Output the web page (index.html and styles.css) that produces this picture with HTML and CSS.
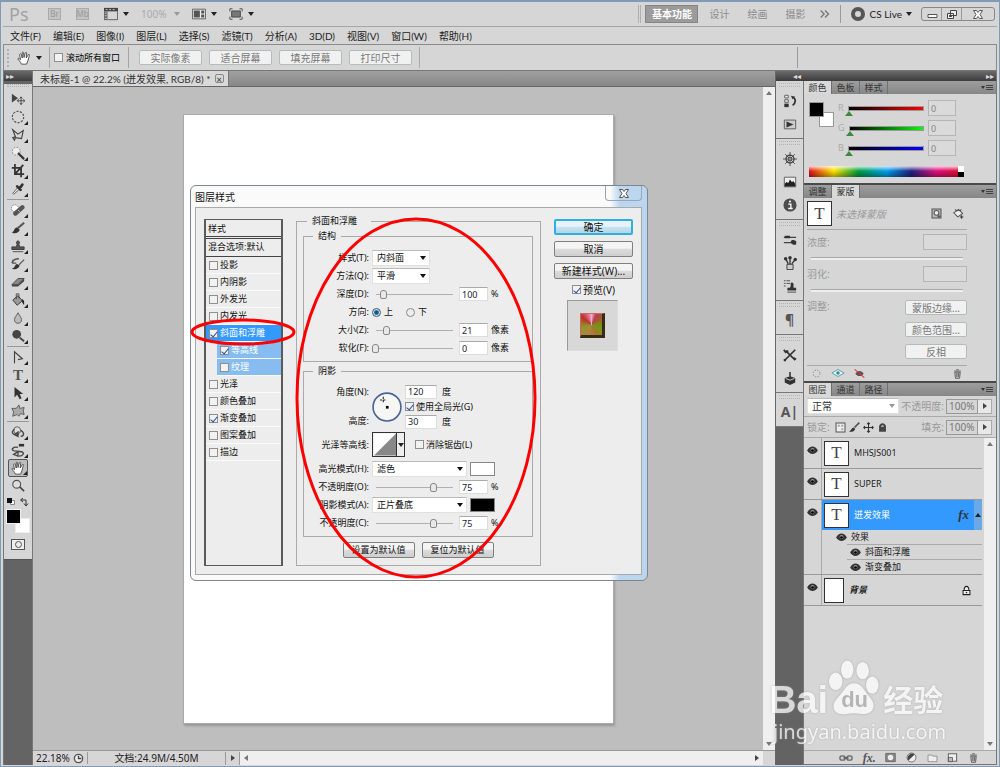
FILE: index.html
```html
<!DOCTYPE html>
<html lang="zh-CN">
<head>
    <meta charset="UTF-8">
    <meta name="viewport" content="width=device-width, initial-scale=1.0">
    <link rel="stylesheet" href="styles.css">
    <title>未标题-1</title>
</head>
<body>
    <header class="titlebar">
        <span class="logo">Ps</span>
        <button class="app-box">Br</button>
        <button class="app-box">Mb</button>
        <button class="app-btn">
            <svg class="icon" viewBox="0 0 16 16"><path d="M0 1h16v4H0z" fill="#444"/><path d="M2 3h2M6 3h2M10 3h2" stroke="#ddd"/><path d="M0 5h4v10H0z" fill="#666"/><path d="M1 7h2M1 10h2M1 13h2" stroke="#ddd"/><path d="M4 14.500h11.500V5" fill="none" stroke="#555"/></svg>
            <i class="arrow"></i>
        </button>
        <button class="app-btn dim">100% <i class="arrow"></i></button>
        <button class="app-btn">
            <svg class="icon" viewBox="0 0 16 16"><path d="M.500 2.500h15v11H.500z" fill="#eee" stroke="#555"/><path d="M2 4h7v8H2zM10.500 4H14v3.500h-3.500zM10.500 8.500H14V12h-3.500z" fill="#555"/></svg>
            <i class="arrow"></i>
        </button>
        <button class="app-btn">
            <svg class="icon" viewBox="0 0 16 16"><path d="M3 4.500h10v7H3z" fill="#777" stroke="#444"/><path d="M1 5V2h3M12 2h3v3M15 11v3h-3M4 14H1v-3" fill="none" stroke="#444"/></svg>
            <i class="arrow"></i>
        </button>
        <div class="workspaces">
            <button class="workspace current">基本功能</button>
            <button class="workspace">设计</button>
            <button class="workspace">绘画</button>
            <button class="workspace">摄影</button>
            <button class="workspace more" aria-label="更多">
                <svg class="icon" viewBox="0 0 16 16"><path d="M3 4l4 4-4 4M8 4l4 4-4 4" fill="none" stroke="#777" stroke-width="1.500"/></svg>
            </button>
        </div>
        <button class="cslive"><span class="ring"></span>CS Live<i class="arrow"></i></button>
        <div class="win-buttons">
            <button aria-label="最小化"><svg viewBox="0 0 18 13"><path d="M5 6.500h9v3H5z" fill="#fff" stroke="#555"/></svg></button>
            <button aria-label="还原"><svg viewBox="0 0 18 13"><path d="M7.500 2.500h6v5h-6zM4.500 5.500h6v5h-6z" fill="#eee" stroke="#444"/><path d="M6.500 7.500h2v1h-2z" stroke="#444"/></svg></button>
            <button aria-label="关闭" class="wide"><svg viewBox="0 0 18 13"><path d="M4.500 2.500h3L9 4.500l1.500-2h3L11 6.500l2.500 4h-3L9 8.500l-1.500 2h-3L7 6.500z" fill="#fff" stroke="#555"/></svg></button>
        </div>
    </header>

    <nav class="menubar">
        <a href="#">文件(F)</a>
        <a href="#">编辑(E)</a>
        <a href="#">图像(I)</a>
        <a href="#">图层(L)</a>
        <a href="#">选择(S)</a>
        <a href="#">滤镜(T)</a>
        <a href="#">分析(A)</a>
        <a href="#">3D(D)</a>
        <a href="#">视图(V)</a>
        <a href="#">窗口(W)</a>
        <a href="#">帮助(H)</a>
    </nav>

    <div class="options">
        <i class="grip-v"></i>
        <svg class="icon" viewBox="0 0 16 16"><path d="M5 15c-1-3-3-4-4-6 0-1 1-1 3 1L3 4c0-1 1.500-1 2 0l1 4V2c0-1 1.500-1 1.500 0L8 7.500 9.500 2c.500-1 1.500-.500 1.500.500L10.500 8 13 4c1-.500 1.500 0 1 1.500L12.500 11 11 15z" fill="#fff" stroke="#444"/></svg>
        <i class="arrow"></i>
        <label class="scroll-all"><input type="checkbox" class="check"> 滚动所有窗口</label>
        <button class="opt-btn">实际像素</button>
        <button class="opt-btn">适合屏幕</button>
        <button class="opt-btn">填充屏幕</button>
        <button class="opt-btn">打印尺寸</button>
        <i class="opt-end"></i>
    </div>

    <main class="main">
        <aside class="tools">
            <div class="dock-head"><i class="dbl">▸▸</i></div>
            <div class="tools-body">
                <i class="grip"></i>
                <button class="tool single"><svg class="icon" viewBox="0 0 16 16"><path d="M1 2v10l7-5z" fill="#444"/><path d="M11.500 6v8M7.500 10h8M10 7.500l1.500-2 1.500 2M10 12.500l1.500 2 1.500-2M9 8.500L7 10l2 1.500M14 8.500l2 1.500-2 1.500" fill="none" stroke="#444"/></svg></button>
                <button class="tool"><svg class="icon" viewBox="0 0 16 16"><circle cx="8" cy="8" r="6.500" fill="none" stroke="#555" stroke-width="1.300" stroke-dasharray="2.500 1.500"/></svg></button>
                <button class="tool"><svg class="icon" viewBox="0 0 16 16"><path d="M2 2l3 8-3 1 2 3 1-3 7 1 2-9-6 4z" fill="none" stroke="#444" stroke-width="1.300"/></svg></button>
                <button class="tool"><svg class="icon" viewBox="0 0 16 16"><circle cx="6" cy="6" r="4.500" fill="#eee" stroke="#777" stroke-dasharray="2 1.500"/><path d="M8 8l7 7" stroke="#333" stroke-width="2.500"/></svg></button>
                <button class="tool"><svg class="icon" viewBox="0 0 16 16"><path d="M4.500 0v11.500H15M1 4.500h10.500V15M5 11l9-10" fill="none" stroke="#333" stroke-width="2"/></svg></button>
                <button class="tool"><svg class="icon" viewBox="0 0 16 16"><path d="M3 14l-1-1 6-7 2 2z" fill="#eee" stroke="#555"/><path d="M7 5l4 4M10 7l3-4" stroke="#333" stroke-width="3" stroke-linecap="round"/></svg></button>
                <hr>
                <button class="tool"><svg class="icon" viewBox="0 0 16 16"><circle cx="4.500" cy="6" r="4" fill="#fff" stroke="#777" stroke-dasharray="2 1"/><path d="M5 12l8-7" stroke="#555" stroke-width="5" stroke-linecap="round"/><path d="M8 8l2 2" stroke="#ccc"/></svg></button>
                <button class="tool"><svg class="icon" viewBox="0 0 16 16"><path d="M8 8l7-6" stroke="#555" stroke-width="2.500"/><path d="M1 13c3-1 2-5 6-6l3 3c-1 4-6 5-9 3z" fill="#333"/></svg></button>
                <button class="tool"><svg class="icon" viewBox="0 0 16 16"><path d="M6 9L7 6C4 1 12 1 9 6l1 3h5v3H1V9z" fill="#555" stroke="#333"/><path d="M2 14.500h12" stroke="#444"/></svg></button>
                <button class="tool"><svg class="icon" viewBox="0 0 16 16"><path d="M1 13c4 0 3-5 6-5l3 2c-2 4-6 5-9 3z" fill="#333"/><path d="M9 9l6-6M1 7c1-4 4-5 8-5M2 3v4h4" fill="none" stroke="#555" stroke-width="1.500"/></svg></button>
                <button class="tool"><svg class="icon" viewBox="0 0 16 16"><path d="M1 11l7-7h7l-7 7z" fill="#888" stroke="#444"/><path d="M1 11v2h7l7-6V4L8 11z" fill="#444"/></svg></button>
                <button class="tool"><svg class="icon" viewBox="0 0 16 16"><path d="M2 8l6-5 5 6-6 5z" fill="#999" stroke="#333"/><path d="M6 7V1h3v5" fill="none" stroke="#444"/><path d="M12 7c4 0 3 5 3 7l-2-3z" fill="#222"/></svg></button>
                <button class="tool"><svg class="icon" viewBox="0 0 16 16"><path d="M8 2c2 4 4 5 4 8s-2 4-4 4-4-1-4-4 2-4 4-8z" fill="#bbb" stroke="#555"/></svg></button>
                <button class="tool"><svg class="icon" viewBox="0 0 16 16"><circle cx="6.500" cy="6" r="5" fill="#444"/><path d="M10 10l5 4" stroke="#444" stroke-width="2"/></svg></button>
                <hr>
                <button class="tool"><svg class="icon" viewBox="0 0 16 16"><path d="M4 15V2l9 8-5 1" fill="none" stroke="#444" stroke-width="1.300"/></svg></button>
                <button class="tool type">T</button>
                <button class="tool"><svg class="icon" viewBox="0 0 16 16"><path d="M4 1v12l3-3 3 5 2-1-2-5h4z" fill="#333"/></svg></button>
                <button class="tool"><svg class="icon" viewBox="0 0 16 16"><path d="M9 1l1 4 5-1-1 4 1 4-4-1-2 3-2-2-5 2 1-5-2-4 5 0z" fill="#aaa" stroke="#555" stroke-linejoin="round"/></svg></button>
                <hr>
                <button class="tool"><svg class="icon" viewBox="0 0 16 16"><circle cx="7" cy="6" r="4" fill="#ddd" stroke="#555"/><path d="M4 5C-2 9 4 12 9 11M11 6c5 3 4 7 0 7M8 8v5l-4-2z" fill="none" stroke="#444" stroke-width="1.500"/></svg></button>
                <button class="tool"><svg class="icon" viewBox="0 0 16 16"><path d="M9 1h6v3H9z" fill="#333"/><path d="M8 5C2 4-1 8 4 9l8 1c4 1 2 5-3 5M8 10v5l-5-2z" fill="none" stroke="#444" stroke-width="1.500"/></svg></button>
                <button class="tool picked"><svg class="icon" viewBox="0 0 16 16"><path d="M5 15c-1-3-3-4-4-6 0-1 1-1 3 1L3 4c0-1 1.500-1 2 0l1 4V2c0-1 1.500-1 1.500 0L8 7.500 9.500 2c.500-1 1.500-.500 1.500.500L10.500 8 13 4c1-.500 1.500 0 1 1.500L12.500 11 11 15z" fill="#fff" stroke="#444"/></svg></button>
                <button class="tool single"><svg class="icon" viewBox="0 0 16 16"><circle cx="6.500" cy="6" r="4.500" fill="#ddd" stroke="#555" stroke-width="1.300"/><path d="M10 9l5 5" stroke="#444" stroke-width="2"/></svg></button>
                <div class="swatch-keys">
                    <svg viewBox="0 0 24 10"><path d="M4.500 3.500h4v4h-4z" fill="#fff" stroke="#888"/><path d="M1 1h5v5H1z" fill="#111"/><path d="M15 3h5v5M17 1l-2.500 2L17 5M18 6.500L20 9l2-2.500" fill="none" stroke="#333"/></svg>
                </div>
                <div class="swatches"><i class="bg"></i><i class="fg"></i></div>
                <button class="quick-mask" aria-label="快速蒙版"><i></i></button>
            </div>
        </aside>

        <section class="document">
            <div class="doc-tabs">
                <div class="doc-tab">未标题-1 @ 22.2% (迸发效果, RGB/8) * <button aria-label="关闭" class="tab-x">×</button></div>
            </div>
            <div class="work">
                <div class="canvas">
                    <div class="paper"></div>

                    <form class="dialog">
                        <div class="dialog-title">
                            <span>图层样式</span>
                            <button type="button" class="dialog-x" aria-label="关闭"><svg viewBox="0 0 18 13"><path d="M4.500 2.500h3L9 4.500l1.500-2h3L11 6.500l2.500 4h-3L9 8.500l-1.500 2h-3L7 6.500z" fill="#fff" stroke="#555"/></svg></button>
                        </div>
                        <div class="dialog-body">
                            <div class="styles">
                                <div class="styles-head">样式</div>
                                <div class="styles-blend">混合选项:默认</div>
                                <label class="style"><input type="checkbox" class="check">投影</label>
                                <label class="style"><input type="checkbox" class="check">内阴影</label>
                                <label class="style"><input type="checkbox" class="check">外发光</label>
                                <label class="style"><input type="checkbox" class="check">内发光</label>
                                <label class="style on"><input type="checkbox" class="check" checked>斜面和浮雕</label>
                                <label class="style sub"><input type="checkbox" class="check" checked>等高线</label>
                                <label class="style sub"><input type="checkbox" class="check">纹理</label>
                                <label class="style"><input type="checkbox" class="check">光泽</label>
                                <label class="style"><input type="checkbox" class="check">颜色叠加</label>
                                <label class="style"><input type="checkbox" class="check" checked>渐变叠加</label>
                                <label class="style"><input type="checkbox" class="check">图案叠加</label>
                                <label class="style"><input type="checkbox" class="check">描边</label>
                            </div>

                            <fieldset class="bevel">
                                <legend>斜面和浮雕</legend>
                                <fieldset class="group">
                                    <legend>结构</legend>
                                    <div class="row">
                                        <label class="name" for="style">样式(T):</label>
                                        <span class="pick"><select id="style"><option>内斜面</option></select></span>
                                    </div>
                                    <div class="row">
                                        <label class="name" for="method">方法(Q):</label>
                                        <span class="pick"><select id="method"><option>平滑</option></select></span>
                                    </div>
                                    <div class="row">
                                        <label class="name" for="depth">深度(D):</label>
                                        <input type="range" class="slider" aria-label="深度" min="0" max="1000" value="100">
                                        <input type="text" class="num" id="depth" value="100"><span>%</span>
                                    </div>
                                    <div class="row">
                                        <span class="name">方向:</span>
                                        <label class="way"><input type="radio" name="way" class="radio" checked>上</label>
                                        <label class="way"><input type="radio" name="way" class="radio">下</label>
                                    </div>
                                    <div class="row">
                                        <label class="name" for="size">大小(Z):</label>
                                        <input type="range" class="slider" aria-label="大小" min="0" max="150" value="21">
                                        <input type="text" class="num" id="size" value="21"><span>像素</span>
                                    </div>
                                    <div class="row">
                                        <label class="name" for="soften">软化(F):</label>
                                        <input type="range" class="slider" aria-label="软化" min="0" max="16" value="0">
                                        <input type="text" class="num" id="soften" value="0"><span>像素</span>
                                    </div>
                                </fieldset>

                                <fieldset class="group">
                                    <legend>阴影</legend>
                                    <div class="light">
                                        <div class="light-names">
                                            <label for="angle">角度(N):</label>
                                            <label for="altitude">高度:</label>
                                        </div>
                                        <svg class="dial" viewBox="0 0 28 28"><circle cx="14" cy="14" r="13" fill="#f6f6f4" stroke="#4a6396" stroke-width="1.500"/><path d="M13 13h2.500v2.500H13z"/><path d="M7.500 7.500h6M10.500 4.500v6" stroke="#222" stroke-dasharray="2 1"/></svg>
                                        <div class="light-values">
                                            <div><input type="text" class="num wide" id="angle" value="120"><span>度</span></div>
                                            <label><input type="checkbox" class="check" checked>使用全局光(G)</label>
                                            <div><input type="text" class="num wide" id="altitude" value="30"><span>度</span></div>
                                        </div>
                                    </div>
                                    <div class="row contour-row">
                                        <span class="name">光泽等高线:</span>
                                        <button type="button" class="contour" aria-label="光泽等高线"><svg viewBox="0 0 24 24"><path d="M0 0h24v24H0z" fill="#fff"/><path d="M0 24L24 0v24z" fill="#888"/></svg><i class="arrow"></i></button>
                                        <label class="alias"><input type="checkbox" class="check">消除锯齿(L)</label>
                                    </div>
                                    <div class="row">
                                        <label class="name" for="hi">高光模式(H):</label>
                                        <span class="pick long"><select id="hi"><option>滤色</option></select></span>
                                        <button type="button" class="chip white" aria-label="高光颜色"></button>
                                    </div>
                                    <div class="row">
                                        <label class="name" for="hi-op">不透明度(O):</label>
                                        <input type="range" class="slider" aria-label="高光不透明度" value="75">
                                        <input type="text" class="num" id="hi-op" value="75"><span>%</span>
                                    </div>
                                    <div class="row">
                                        <label class="name" for="sh">阴影模式(A):</label>
                                        <span class="pick long"><select id="sh"><option>正片叠底</option></select></span>
                                        <button type="button" class="chip black" aria-label="阴影颜色"></button>
                                    </div>
                                    <div class="row">
                                        <label class="name" for="sh-op">不透明度(C):</label>
                                        <input type="range" class="slider" aria-label="阴影不透明度" value="75">
                                        <input type="text" class="num" id="sh-op" value="75"><span>%</span>
                                    </div>
                                </fieldset>
                                <div class="defaults">
                                    <button type="button" class="btn">设置为默认值</button>
                                    <button type="button" class="btn">复位为默认值</button>
                                </div>
                            </fieldset>

                            <div class="actions">
                                <button type="button" class="btn ok">确定</button>
                                <button type="button" class="btn">取消</button>
                                <button type="button" class="btn">新建样式(W)...</button>
                                <label class="preview-label"><input type="checkbox" class="check" checked>预览(V)</label>
                                <div class="preview"><i></i></div>
                            </div>
                        </div>
                        <!-- red marks round the bevel entry and its settings -->
                        <svg class="marks" viewBox="0 0 458 396">
                            <ellipse cx="53" cy="147" rx="51" ry="12"/>
                            <ellipse cx="226" cy="213" rx="119" ry="179"/>
                        </svg>
                    </form>
                </div>
                <div class="vscroll"><i class="up"></i><i class="down"></i></div>
            </div>
            <div class="status">
                <span class="zoom">22.18%</span>
                <svg class="icon small" viewBox="0 0 16 16"><circle cx="8" cy="8" r="6" fill="#eee" stroke="#555" stroke-width="2"/><path d="M8 4v4h4" fill="none" stroke="#444" stroke-width="2"/></svg>
                <span class="size">文档:24.9M/4.50M</span>
                <button class="status-more" aria-label="更多"><i class="next"></i></button>
                <div class="hscroll"><i class="prev"></i><i class="next"></i></div>
                <i class="corner"></i>
            </div>
        </section>

        <aside class="side">
            <div class="dock-head both"><i class="dbl">◂◂</i><i class="dbl">▸▸</i></div>
            <div class="side-cols">
                <div class="dock">
                    <div class="dock-group">
                        <i class="grip"></i>
                        <button><svg class="icon" viewBox="0 0 16 16"><path d="M2 1.500h4v3H2zM2 6.500h4v3H2z" fill="#eee" stroke="#555"/><path d="M1.500 11h5v4h-5z" fill="#333"/><path d="M9 2l5 1-3 3z" fill="#333"/><path d="M11 4c4 1 4 6 0 9" fill="none" stroke="#333" stroke-width="2"/></svg></button>
                        <button><svg class="icon" viewBox="0 0 16 16"><path d="M1.500 3.500h13v10h-13z" fill="#ccc" stroke="#555"/><path d="M4 5v7l8-3.500z" fill="#333"/></svg></button>
                    </div>
                    <div class="dock-group">
                        <i class="grip"></i>
                        <button><svg class="icon" viewBox="0 0 16 16"><circle cx="8" cy="8" r="4.500" fill="none" stroke="#444" stroke-width="1.500"/><path d="M8 0v16M0 8h16M2.500 2.500l11 11M13.500 2.500l-11 11" stroke="#444"/><circle cx="8" cy="8" r="1.500" fill="#ddd" stroke="#333"/></svg></button>
                        <button><svg class="icon" viewBox="0 0 16 16"><path d="M1.500 2.500h13v11h-13z" fill="#eee" stroke="#555"/><path d="M2 13v-3l2-2 2 1 2-4 2 3 2-1 2 3v3z" fill="#222"/></svg></button>
                        <button><svg class="icon" viewBox="0 0 16 16"><circle cx="8" cy="8" r="7.500" fill="#4c4c4c"/><path d="M6 7h3v5M6 12h5" fill="none" stroke="#fff" stroke-width="1.500"/><circle cx="8" cy="4" r="1.200" fill="#fff"/></svg></button>
                    </div>
                    <div class="dock-group">
                        <i class="grip"></i>
                        <button><svg class="icon" viewBox="0 0 16 16"><path d="M1 5h14M1 11h14" stroke="#444" stroke-width="1.500"/><path d="M2 3h6v3H2zM9 9c2-2 5 0 6 0v4c-2 1-5 0-6-2z" fill="#333"/></svg></button>
                        <button><svg class="icon" viewBox="0 0 16 16"><path d="M4.500 9.500h7v6h-7z" fill="#ccc" stroke="#333"/><path d="M6 9L3 3M8 9V3M10 9l4-5" stroke="#333" stroke-width="1.500"/><circle cx="3" cy="3" r="2" fill="#333"/><circle cx="8" cy="2" r="2" fill="#333"/><circle cx="14" cy="4" r="2" fill="#333"/></svg></button>
                        <button><svg class="icon" viewBox="0 0 16 16"><path d="M1 2h2M4 2h4M1 5h2M4 5h4M1 8h2" stroke="#444"/><path d="M8 10l1-3c-2-4 4-4 3 0l0 3h3v3H5v-3z" fill="#333"/><path d="M5 15h10" stroke="#444"/></svg></button>
                    </div>
                    <div class="dock-group">
                        <i class="grip"></i>
                        <button class="glyph">¶</button>
                    </div>
                    <div class="dock-group">
                        <i class="grip"></i>
                        <button><svg class="icon" viewBox="0 0 16 16"><path d="M3 3l11 11M14 2L2 14" stroke="#333" stroke-width="2"/><path d="M1 2l2 3 3-2M12 11l3 2M1 13l2 2" fill="none" stroke="#333" stroke-width="2"/></svg></button>
                        <button><svg class="icon" viewBox="0 0 16 16"><path d="M2 8l6-2 6 2v5l-6 3-6-3z" fill="#333"/><path d="M8 1v6" stroke="#444" stroke-width="2"/><path d="M3 8.500l5 2 5-2" fill="none" stroke="#ddd"/></svg></button>
                    </div>
                    <div class="dock-group">
                        <i class="grip"></i>
                        <button class="glyph">A|</button>
                    </div>
                </div>

                <div class="panels">
                    <section class="panel">
                        <div class="tabs"><button class="tab on">颜色</button><button class="tab">色板</button><button class="tab">样式</button><button class="menu" aria-label="面板菜单"><svg viewBox="0 0 12 8"><path d="M0 2h4L2 5z" fill="#333"/><path d="M5 1.500h7M5 3.500h7M5 5.500h7" stroke="#444"/></svg></button></div>
                        <div class="color">
                            <div class="color-top">
                                <div class="color-chips"><i class="bg"></i><i class="fg"></i></div>
                                <div class="channels">
                                    <label class="channel">R <span class="bar red"></span><input type="text" class="dim-box" value="0"></label>
                                    <label class="channel">G <span class="bar green"></span><input type="text" class="dim-box" value="0"></label>
                                    <label class="channel">B <span class="bar blue"></span><input type="text" class="dim-box" value="0"></label>
                                </div>
                            </div>
                            <div class="spectrum"><i></i></div>
                        </div>
                    </section>

                    <section class="panel">
                        <div class="tabs"><button class="tab">调整</button><button class="tab on">蒙版</button><button class="menu" aria-label="面板菜单"><svg viewBox="0 0 12 8"><path d="M0 2h4L2 5z" fill="#333"/><path d="M5 1.500h7M5 3.500h7M5 5.500h7" stroke="#444"/></svg></button></div>
                        <div class="mask">
                            <div class="mask-top">
                                <span class="thumb">T</span>
                                <em>未选择蒙版</em>
                                <svg class="icon small" viewBox="0 0 16 16"><path d="M1.500 1.500h13v13h-13z" fill="#bbb" stroke="#555" stroke-width="1.500"/><circle cx="8" cy="7" r="3.500" fill="#eee" stroke="#555" stroke-width="1.500"/><path d="M9 12h5M11.500 9.500v5" stroke="#333"/></svg>
                                <svg class="icon small" viewBox="0 0 16 16"><path d="M1 7l7-5 6 6-7 5zM3 2l3 3M12 2l-2 3" fill="#eee" stroke="#555" stroke-width="1.500"/><path d="M10 13h5M12.500 10.500v5" stroke="#333" stroke-width="1.500"/></svg>
                            </div>
                            <div class="mask-row"><label for="density">浓度:</label><input type="text" class="dim-box" id="density"></div>
                            <div class="track"></div>
                            <div class="mask-row"><label for="feather">羽化:</label><input type="text" class="dim-box" id="feather"></div>
                            <div class="track"></div>
                            <div class="mask-adjust">
                                <span>调整:</span>
                                <div class="mask-btns">
                                    <button class="opt-btn">蒙版边缘...</button>
                                    <button class="opt-btn">颜色范围...</button>
                                    <button class="opt-btn">反相</button>
                                </div>
                            </div>
                            <div class="mask-foot">
                                <svg class="icon small" viewBox="0 0 16 16"><circle cx="8" cy="8" r="5" fill="none" stroke="#999" stroke-width="1.500" stroke-dasharray="2 2"/></svg>
                                <svg class="icon" viewBox="0 0 16 16"><path d="M1 8l7-4 7 4-7 4z" fill="#e8f4f4" stroke="#4f9aa0"/><circle cx="8" cy="8" r="2" fill="#3986a8"/></svg>
                                <svg class="icon small" viewBox="0 0 16 16"><path d="M2 8c3-5 9-5 12 0-3 5-9 5-12 0z" fill="#555"/><path d="M1 2l14 12" stroke="#d33" stroke-width="1.500"/></svg>
                                <svg class="icon small last" viewBox="0 0 16 16"><path d="M4 6h8l-1 9H5zM3 4.500h10M6 2.500h4M7 7v6M9.500 7v6" fill="#bbb" stroke="#555" stroke-width="1.200"/></svg>
                            </div>
                        </div>
                    </section>

                    <section class="panel layers">
                        <div class="tabs"><button class="tab on">图层</button><button class="tab">通道</button><button class="tab">路径</button><button class="menu" aria-label="面板菜单"><svg viewBox="0 0 12 8"><path d="M0 2h4L2 5z" fill="#333"/><path d="M5 1.500h7M5 3.500h7M5 5.500h7" stroke="#444"/></svg></button></div>
                        <div class="layer-opts">
                            <span class="pick blend"><select aria-label="混合模式"><option>正常</option></select></span>
                            <label for="opacity">不透明度:</label>
                            <input type="text" class="pct" id="opacity" value="100%"><button class="pct-more" aria-label="不透明度"><i class="next"></i></button>
                        </div>
                        <div class="layer-opts">
                            <span class="lock-name">锁定:</span>
                            <svg class="icon small" viewBox="0 0 16 16"><path d="M1.500 1.500h13v13h-13z" fill="#eee" stroke="#555" stroke-width="1.500"/><path d="M4 4h3v3H4zM9 9h3v3H9zM9 4h3v3H9z" fill="#aaa"/></svg>
                            <svg class="icon small" viewBox="0 0 16 16"><path d="M8 8l7-7" stroke="#555" stroke-width="2.500"/><path d="M0 14c3-1 3-5 7-6l2 2c-1 4-6 5-9 4z" fill="#333"/></svg>
                            <svg class="icon small" viewBox="0 0 16 16"><path d="M8 1v14M1 8h14M6 3l2-2 2 2M6 13l2 2 2-2M3 6L1 8l2 2M13 6l2 2-2 2" fill="none" stroke="#333" stroke-width="1.500"/></svg>
                            <svg class="icon small" viewBox="0 0 16 16"><path d="M3 7c0-7 10-7 10 0v7H3z" fill="#444"/><path d="M6 7c0-3 4-3 4 0z" fill="#ccc"/></svg>
                            <label for="fill" class="last">填充:</label>
                            <input type="text" class="pct" id="fill" value="100%"><button class="pct-more" aria-label="填充"><i class="next"></i></button>
                        </div>
                        <div class="layer-area">
                            <div class="layer-list">
                                <div class="layer"><span class="eye-box"><svg class="eye" viewBox="0 0 12 10"><path d="M0 5c3-6 9-6 12 0-3 5-9 5-12 0z" fill="#333"/><circle cx="6" cy="4.500" r="2.200" fill="#999"/><circle cx="6" cy="5" r="1.500"/></svg></span><div class="layer-main"><span class="thumb">T</span>MHSJS001</div></div>
                                <div class="layer"><span class="eye-box"><svg class="eye" viewBox="0 0 12 10"><path d="M0 5c3-6 9-6 12 0-3 5-9 5-12 0z" fill="#333"/><circle cx="6" cy="4.500" r="2.200" fill="#999"/><circle cx="6" cy="5" r="1.500"/></svg></span><div class="layer-main"><span class="thumb">T</span>SUPER</div></div>
                                <div class="layer open"><span class="eye-box"><svg class="eye" viewBox="0 0 12 10"><path d="M0 5c3-6 9-6 12 0-3 5-9 5-12 0z" fill="#333"/><circle cx="6" cy="4.500" r="2.200" fill="#999"/><circle cx="6" cy="5" r="1.500"/></svg></span>
                                    <div class="layer-stack">
                                        <div class="layer-main chosen"><span class="thumb">T</span>迸发效果<i class="fx">fx</i><span class="fold"><i class="up"></i></span></div>
                                        <div class="effects">
                                            <div class="effect"><svg class="eye" viewBox="0 0 12 10"><path d="M0 5c3-6 9-6 12 0-3 5-9 5-12 0z" fill="#333"/><circle cx="6" cy="4.500" r="2.200" fill="#999"/><circle cx="6" cy="5" r="1.500"/></svg>效果</div>
                                            <div class="effect nested"><svg class="eye" viewBox="0 0 12 10"><path d="M0 5c3-6 9-6 12 0-3 5-9 5-12 0z" fill="#333"/><circle cx="6" cy="4.500" r="2.200" fill="#999"/><circle cx="6" cy="5" r="1.500"/></svg>斜面和浮雕</div>
                                            <div class="effect nested"><svg class="eye" viewBox="0 0 12 10"><path d="M0 5c3-6 9-6 12 0-3 5-9 5-12 0z" fill="#333"/><circle cx="6" cy="4.500" r="2.200" fill="#999"/><circle cx="6" cy="5" r="1.500"/></svg>渐变叠加</div>
                                        </div>
                                    </div>
                                </div>
                                <div class="layer"><span class="eye-box"><svg class="eye" viewBox="0 0 12 10"><path d="M0 5c3-6 9-6 12 0-3 5-9 5-12 0z" fill="#333"/><circle cx="6" cy="4.500" r="2.200" fill="#999"/><circle cx="6" cy="5" r="1.500"/></svg></span><div class="layer-main"><span class="thumb plain"></span><em>背景</em><svg class="icon small lock" viewBox="0 0 16 16"><path d="M3 8h10v6H3zM4.500 8c0-8 7-8 7 0" fill="#eee" stroke="#222" stroke-width="1.500"/><path d="M7 11h2" stroke="#222" stroke-width="2"/></svg></div></div>
                            </div>
                            <div class="vscroll"><i class="up"></i><i class="down"></i></div>
                        </div>
                        <div class="layer-foot">
                            <svg class="icon" viewBox="0 0 16 16"><rect x="1" y="5.500" width="6" height="5" rx="2.500" fill="none" stroke="#666" stroke-width="1.500"/><rect x="9" y="5.500" width="6" height="5" rx="2.500" fill="none" stroke="#666" stroke-width="1.500"/><path d="M5 8h6" stroke="#555" stroke-width="1.500"/></svg>
                            <i class="fx">fx.</i>
                            <svg class="icon small" viewBox="0 0 16 16"><path d="M1 2h14v12H1z" fill="#888" stroke="#555"/><circle cx="8" cy="8" r="4" fill="#eee"/></svg>
                            <svg class="icon small" viewBox="0 0 16 16"><circle cx="8" cy="8" r="6.500" fill="#eee" stroke="#444"/><path d="M3.500 12.500a6.500 6.500 0 0 1 9-9z" fill="#444"/></svg>
                            <svg class="icon small" viewBox="0 0 16 16"><path d="M1.500 4.500h6l1 1.500h6v8h-13z" fill="#eee" stroke="#777"/></svg>
                            <svg class="icon small" viewBox="0 0 16 16"><path d="M2 2.500h12v11H2z" fill="#eee" stroke="#666" stroke-width="1.500"/><path d="M2 8h6v6H2z" fill="#bbb" stroke="#444"/></svg>
                            <svg class="icon small" viewBox="0 0 16 16"><path d="M4 6h8l-1 9H5zM3 4.500h10M6 2.500h4M7 7v6M9.500 7v6" fill="#bbb" stroke="#555" stroke-width="1.200"/></svg>
                        </div>
                    </section>
                </div>
            </div>
        </aside>
    </main>

    <div class="watermark">
        <div class="brand">
            <span class="bai">Bai</span>
            <span class="paw">
                <svg viewBox="0 0 54 58"><g fill="#fff"><ellipse cx="8" cy="22" rx="7" ry="9"/><ellipse cx="20" cy="10" rx="6.500" ry="9.500"/><ellipse cx="36" cy="11" rx="6.500" ry="9"/><ellipse cx="46" cy="26" rx="6.500" ry="9"/><path d="M27 24c8 0 10 7 16 14 9 10 3 19-8 18-5-1-11-1-16 0C7 58 1 49 10 39c7-7 9-15 17-15z"/></g></svg>
                <b>du</b>
            </span>
            <span class="jy">经验</span>
        </div>
        <div class="site">jingyan.baidu.com</div>
    </div>
</body>
</html>
```

FILE: styles.css
```css
* {
    box-sizing: border-box;
}

body {
    margin: 0;
    height: 100vh;
    display: flex;
    flex-direction: column;
    position: relative;
    overflow: hidden;
    border: 1px solid #7f9bb5;
    border-width: 2px 1px 1px 1px;
    padding: 0 2px 1px 2px;
    background: #d6d6d6;
    color: #222;
    font-family: "Noto Sans", "Noto Sans CJK SC", sans-serif;
    font-size: 10px;
    line-height: 12px;
}

button,
input,
select {
    font: inherit;
    color: inherit;
    margin: 0;
    padding: 0;
    border: 0;
    background: none;
}

button {
    display: flex;
    align-items: center;
    justify-content: center;
    white-space: nowrap;
}

i {
    font-style: normal;
    flex: none;
}

.icon {
    width: 14px;
    height: 14px;
    flex: none;
}

.icon.small {
    width: 11px;
    height: 11px;
}

.arrow,
.up,
.down,
.prev,
.next {
    display: block;
    width: 0;
    height: 0;
    border: 3px solid transparent;
}

.arrow,
.down {
    border-top: 4px solid #222;
    border-bottom: 0;
}

.up {
    border-bottom: 4px solid #777;
    border-top: 0;
}

.prev {
    border-right: 4px solid #777;
    border-left: 0;
}

.next {
    border-left: 4px solid #444;
    border-right: 0;
}

/* top bars */
.titlebar {
    height: 25px;
    flex: none;
    display: flex;
    align-items: center;
    padding: 0 2px 0 6px;
    border-bottom: 1px solid #a5a5a5;
}

.logo {
    width: 39px;
    font-size: 18px;
    line-height: 20px;
    color: #a2a2a2;
}

.app-box {
    width: 13px;
    height: 12px;
    margin-right: 15px;
    border: 1px solid #aaa;
    background: #c4c4c4;
    color: #999;
    font-size: 8px;
    line-height: 10px;
}

.app-btn {
    gap: 5px;
    margin-right: 12px;
}

.dim {
    color: #aaa;
}

.dim .arrow {
    border-top-color: #999;
    margin-left: 3px;
}

.workspaces {
    margin-left: auto;
    display: flex;
    align-items: center;
    padding: 0 4px;
    border-left: 3px double #b0b0b0;
    border-right: 1px solid #999;
}

.workspace {
    height: 18px;
    width: 38px;
    color: #8c8c8c;
}

.workspace.current {
    width: 53px;
    margin-right: 2px;
    border: 1px solid #858585;
    background: #9b9b9b;
    color: #fff;
    font-weight: bold;
}

.workspace.more {
    width: 22px;
}

.cslive {
    gap: 4px;
    margin: 0 9px 0 10px;
}

.ring {
    width: 14px;
    height: 14px;
    border: 4px solid #555;
    border-radius: 50%;
}

.win-buttons {
    display: flex;
    border: 1px solid #888;
    border-radius: 3px;
}

.win-buttons button {
    width: 20px;
    height: 12px;
    border-right: 1px solid #999;
}

.win-buttons .wide {
    width: 32px;
    border-right: 0;
}

.win-buttons svg,
.dialog-x svg {
    width: 18px;
    height: 13px;
}

.menubar,
.cslive,
.doc-tab {
    font-family: Lato, "Noto Sans CJK SC", sans-serif;
}

.menubar {
    height: 17px;
    flex: none;
    display: flex;
    align-items: center;
    gap: 12px;
    padding-left: 7px;
}

.menubar a {
    color: #222;
    text-decoration: none;
}

.options {
    height: 27px;
    flex: none;
    display: flex;
    align-items: center;
    border: 1px solid #8a8a8a;
    border-bottom-color: #777;
    padding-left: 3px;
}

.grip-v {
    width: 3px;
    height: 18px;
    margin-right: 7px;
    border-left: 2px dotted #b0b0b0;
}

.options > .arrow {
    margin: 0 7px 0 5px;
}

.scroll-all {
    display: flex;
    align-items: center;
    gap: 3px;
    height: 21px;
    padding: 0 8px 0 4px;
    margin-right: 10px;
    border: 1px solid #a5a5a5;
    border-width: 0 1px;
    color: #000;
    font-size: 9px;
}

.opt-btn {
    width: 63px;
    height: 15px;
    margin-right: 7px;
    border: 1px solid #b5bbbd;
    border-radius: 2px;
    background: #f1f1f1;
    color: #777;
}

.opt-end {
    height: 21px;
    flex: 1;
    border-left: 1px solid #aaa;
    border-right: 1px solid #999;
    margin-right: 198px;
}

/* form bits */
.check {
    appearance: none;
    flex: none;
    width: 9px;
    height: 9px;
    border: 1px solid #8e8f8f;
    background: #f2f2f2;
    display: flex;
    justify-content: center;
}

.check:checked::after {
    content: "";
    width: 3px;
    height: 6px;
    border: solid #2b4a9b;
    border-width: 0 1px 1px 0;
    transform: rotate(40deg);
}

.radio {
    appearance: none;
    width: 9px;
    height: 9px;
    border: 1px solid #888;
    border-radius: 50%;
    background: #eee;
}

.radio:checked {
    border-color: #456;
    background: radial-gradient(#0d5a90 35%, #cfe4f2 60%);
}

.pick {
    display: flex;
    align-items: center;
    width: 58px;
    height: 16px;
    padding-right: 3px;
    background: #fff;
    border: 1px solid #e0e0e0;
    border-top-color: #bbb;
}

.pick::after {
    content: "";
    border: 3px solid transparent;
    border-top: 4px solid #111;
    border-bottom: 0;
}

.pick select {
    appearance: none;
    flex: 1;
    min-width: 0;
    padding-left: 4px;
    outline: 0;
}

.pick.long {
    width: 95px;
}

.num {
    width: 29px;
    height: 14px;
    padding-left: 2px;
    margin-right: 3px;
    background: #fff;
    border: 1px solid #ddd;
    border-top-color: #aaa;
    color: #223;
}

.num.wide {
    width: 32px;
}

.slider {
    appearance: none;
    width: 84px;
    height: 12px;
    margin: 0 3px 0 0;
}

.slider::-webkit-slider-runnable-track {
    height: 1px;
    background: linear-gradient(#b0b0b0, #b0b0b0) center / calc(100% - 7px) 1px no-repeat;
}

.slider::-webkit-slider-thumb {
    appearance: none;
    width: 7px;
    height: 9px;
    margin-top: -4px;
    border: 1px solid #888;
    border-radius: 3px 3px 2px 2px;
    background: #e8e8e8;
}

.btn {
    height: 16px;
    border: 1px solid #808080;
    border-radius: 2px;
    background: linear-gradient(#f4f4f4 45%, #dcdcdc 50%, #cfcfcf);
    color: #111;
}

.btn.ok {
    border: 2px solid #2fb0dc;
    background: linear-gradient(#e6f3fa 45%, #c9e4f2 50%, #b4d5e8);
}

/* main row */
.main {
    flex: 1;
    min-height: 0;
    display: flex;
}

.dock-head {
    height: 10px;
    flex: none;
    display: flex;
    align-items: center;
    padding: 0 2px;
    background: linear-gradient(#6a6a6a, #3c3c3c);
    color: #ddd;
}

.dock-head.both {
    padding-left: 17px;
    justify-content: space-between;
}

.dbl {
    font-size: 8px;
    line-height: 8px;
}

.grip {
    display: block;
    height: 3px;
    margin: 3px 3px 0;
    border: dotted #b2b2b2;
    border-width: 1px 0;
}

.tools {
    width: 30px;
    flex: none;
    border: 1px solid #777;
    border-width: 0 1px;
    background: #646464;
}

.tools-body {
    background: #d6d6d6;
    padding-bottom: 9px;
    border-bottom: 1px solid #555;
}

.tools-body .grip {
    margin-bottom: 3px;
}

.tools hr {
    margin: 1px 3px;
    border: 0;
    border-top: 1px solid #999;
}

.tool {
    width: 20px;
    height: 18px;
    margin: 0 auto;
    position: relative;
}

.tool::after {
    content: "";
    position: absolute;
    right: 0;
    bottom: 1px;
    border: 2px solid #222;
    border-left-color: transparent;
    border-top-color: transparent;
}

.tool.single::after {
    display: none;
}

.tool.type {
    font-family: "Liberation Serif", serif;
    font-size: 15px;
    font-weight: bold;
    color: #555;
}

.tool.picked {
    border: 1px solid #555;
    border-radius: 2px;
    background: #bdbdbd;
}

.swatch-keys svg {
    display: block;
    width: 24px;
    height: 10px;
    margin: 2px auto;
}

.swatches,
.color-chips {
    position: relative;
    width: 24px;
    height: 24px;
    margin: 0 auto;
}

.swatches i,
.color-chips i {
    position: absolute;
    width: 15px;
    height: 15px;
    border: 1px solid #eee;
}

.fg {
    left: 0;
    top: 0;
    background: #000;
}

.bg {
    right: 0;
    bottom: 0;
    background: #fff;
}

.quick-mask {
    width: 14px;
    height: 11px;
    margin: 6px auto 0;
    border: 1px solid #555;
    background: #eee;
}

.quick-mask i {
    width: 7px;
    height: 7px;
    border: 1px solid #555;
    border-radius: 50%;
}

/* document window */
.document {
    flex: 1;
    min-width: 0;
    display: flex;
    flex-direction: column;
}

.doc-tabs {
    height: 16px;
    background: linear-gradient(#a0a0a0, #878787);
    border-bottom: 1px solid #666;
}

.doc-tab {
    display: inline-flex;
    align-items: center;
    gap: 4px;
    height: 15px;
    padding: 0 4px 0 7px;
    background: #d9d9d9;
    border-right: 1px solid #777;
    color: #333;
    white-space: nowrap;
}

.tab-x {
    width: 9px;
    height: 9px;
    border: 1px solid #888;
    border-radius: 2px;
}

.work {
    flex: 1;
    min-height: 0;
    display: flex;
}

.canvas {
    flex: 1;
    min-width: 0;
    position: relative;
    display: flex;
    align-items: center;
    justify-content: center;
    background: #bebebe;
}

.paper {
    width: 431px;
    height: 610px;
    background: #fff;
    border: 1px solid #aaa;
    box-shadow: 1px 2px 2px #999;
}

.vscroll {
    width: 12px;
    flex: none;
    display: flex;
    flex-direction: column;
    justify-content: space-between;
    align-items: center;
    padding: 4px 0;
    background: #efefef;
}

.vscroll .down {
    border-top-color: #777;
}

.status {
    height: 15px;
    flex: none;
    display: flex;
    align-items: center;
    border-top: 1px solid #999;
}

.zoom {
    width: 40px;
    padding-left: 3px;
}

.size {
    width: 138px;
    margin-left: 3px;
    text-align: center;
    border-left: 1px solid #999;
}

.status-more {
    width: 15px;
    height: 13px;
    border: 1px solid #999;
    border-width: 0 1px;
}

.hscroll {
    flex: 1;
    height: 14px;
    display: flex;
    align-items: center;
    justify-content: space-between;
    padding: 0 4px;
    background: #efefef;
}

.corner {
    width: 12px;
}

/* layer style window */
.dialog {
    position: absolute;
    left: 157px;
    top: 98px;
    width: 458px;
    padding: 0 5px 5px 4px;
    border: 1px solid #7d8790;
    border-radius: 6px;
    background: linear-gradient(90deg, #fafafa 92%, #bcd6ef 94%);
    font-size: 9px;
    color: #111;
}

.dialog-title {
    height: 21px;
    display: flex;
    align-items: center;
    justify-content: space-between;
    font-size: 10px;
}

.dialog-x {
    align-self: flex-start;
    width: 37px;
    height: 15px;
    border: 1px solid #9aa5b0;
    border-top: 0;
    border-radius: 0 0 4px 4px;
}

.dialog-body {
    display: flex;
    gap: 13px;
    padding: 8px;
    border: 1px solid #a9a9a9;
    background: #ededed;
}

.styles {
    width: 79px;
    margin-top: 3px;
    flex: none;
    border: 2px solid #5a5a5a;
    border-width: 1px 2px;
}

.styles-head {
    height: 19px;
    padding: 3px 2px 0;
    border-bottom: 3px double #444;
}

.styles-blend {
    height: 18px;
    padding: 2px 2px 0;
    border-bottom: 1px solid #444;
}

.style {
    display: flex;
    align-items: center;
    gap: 2px;
    height: 17px;
    padding-left: 3px;
    border-bottom: 1px solid #fafafa;
    white-space: nowrap;
}

.style.on {
    background: #3399ff;
    color: #fff;
}

.style.sub {
    margin-left: 11px;
    background: #86bcf0;
    color: #fff;
}

fieldset {
    min-width: 0;
    margin: 0;
    border: 1px solid #aaa;
}

legend {
    line-height: 10px;
    padding: 0 5px;
    margin-left: 4px;
}

.bevel {
    flex: 1;
    padding: 5px 7px 7px 6px;
}

.bevel > legend {
    padding-right: 14px;
}

.group {
    padding: 8px 0 4px;
}

.group legend {
    margin-left: 9px;
}

.group + .group {
    margin-top: 4px;
}

.row {
    height: 18px;
    display: flex;
    align-items: center;
    white-space: nowrap;
}

.name {
    width: 65px;
    margin-right: 3px;
    flex: none;
    text-align: right;
}

.way {
    display: flex;
    align-items: center;
    gap: 3px;
    width: 34px;
}

.light {
    display: flex;
    align-items: center;
    height: 45px;
    white-space: nowrap;
}

.light-names {
    width: 65px;
    height: 45px;
    display: flex;
    flex-direction: column;
    justify-content: space-between;
    padding: 2px 0;
    text-align: right;
}

.dial {
    width: 30px;
    height: 30px;
    margin: 0 3px;
}

.light-values > * {
    display: flex;
    align-items: center;
    height: 15px;
    gap: 2px;
}

.contour-row {
    height: 25px;
    margin: 3px 0;
}

.contour {
    height: 25px;
    width: 33px;
    border: 1px solid #333;
    background: #eee;
    gap: 1px;
}

.contour svg {
    width: 23px;
    height: 23px;
    border-right: 1px solid #333;
}

.alias {
    display: flex;
    align-items: center;
    gap: 2px;
    margin-left: 10px;
}

.chip {
    width: 25px;
    height: 14px;
    margin-left: 3px;
    border: 1px solid #888;
}

.chip.white {
    background: #fff;
}

.chip.black {
    background: #000;
}

.defaults {
    display: flex;
    justify-content: center;
    gap: 7px;
    padding-top: 5px;
}

.defaults .btn {
    width: 72px;
}

.actions {
    width: 79px;
    flex: none;
    display: flex;
    flex-direction: column;
    gap: 6px;
    padding-top: 3px;
    font-size: 10px;
}

.preview-label {
    display: flex;
    align-items: center;
    justify-content: center;
    gap: 2px;
    height: 9px;
}

.preview {
    width: 51px;
    height: 51px;
    margin-left: 13px;
    display: flex;
    align-items: center;
    justify-content: center;
    border: 1px solid #999;
    border-right-color: #ddd;
    border-bottom-color: #ddd;
    background: #d8d8d8;
}

.preview i {
    width: 25px;
    height: 25px;
    border: 1px solid #c96a5a;
    border-width: 1px 3px 3px 1px;
    border-right-color: #3a2a14;
    border-bottom-color: #3a2a14;
    background: conic-gradient(#e9b0c8, #c03a50 25deg, #9a6030 60deg, #7f8a14 90deg, #6f9a1c 120deg, #a8752a 150deg, #b08440 200deg, #8a9a2a 250deg, #a86a2a 280deg, #b8302a 310deg, #e06a90 340deg, #e9b0c8);
}

.marks {
    position: absolute;
    left: -1px;
    top: -1px;
    width: 458px;
    height: 396px;
    overflow: visible;
    pointer-events: none;
    fill: none;
    stroke: #f00;
    stroke-width: 3px;
}

/* right docks */
.side {
    width: 222px;
    flex: none;
    display: flex;
    flex-direction: column;
    border-left: 1px solid #666;
    border-right: 1px solid #777;
}

.side-cols {
    flex: 1;
    min-height: 0;
    display: flex;
}

.dock {
    width: 27px;
    flex: none;
    background: #636363;
}

.dock-group {
    background: #d6d6d6;
    border-bottom: 1px solid #777;
    padding: 2px 0 3px;
}

.dock-group .grip {
    height: 4px;
    margin: 0 3px 2px;
}

.dock-group button {
    width: 100%;
    height: 23px;
}

.dock-group .glyph {
    height: 22px;
    font-size: 14px;
    font-weight: bold;
    color: #555;
}

.panels {
    flex: 1;
    min-width: 0;
    display: flex;
    flex-direction: column;
    border-left: 1px solid #777;
}

.panel {
    border-bottom: 2px solid #4a4a4a;
}

.tabs {
    height: 13px;
    flex: none;
    display: flex;
    background: linear-gradient(#9e9e9e, #868686);
}

.tab {
    width: 28px;
    font-size: 9px;
    color: #333;
    border-right: 1px solid #707070;
}

.tab.on {
    background: #d9d9d9;
}

.menu {
    margin-left: auto;
    padding-right: 3px;
}

.menu svg {
    width: 12px;
    height: 8px;
}

.color {
    height: 89px;
    padding: 4px 32px 6px 5px;
    display: flex;
    flex-direction: column;
    justify-content: space-between;
}

.color-top {
    display: flex;
    margin-right: 8px;
    gap: 4px;
}

.color-chips {
    width: 25px;
    height: 25px;
    margin: 4px 0;
    flex: none;
}

.color-chips i {
    border: 1px solid #999;
}

.channels {
    flex: 1;
}

.channel {
    display: flex;
    align-items: center;
    gap: 4px;
    height: 20px;
    font-size: 9px;
    color: #aaa;
}

.bar {
    flex: 1;
    height: 5px;
    border: 1px solid #999;
    position: relative;
}

.bar::after {
    content: "";
    position: absolute;
    left: -4px;
    top: 4px;
    border: 4px solid transparent;
    border-top: 0;
    border-bottom: 5px solid #3c8a3c;
}

.red {
    background: linear-gradient(90deg, #000, #f00);
}

.green {
    background: linear-gradient(90deg, #000, #0f0);
}

.blue {
    background: linear-gradient(90deg, #000, #00f);
}

.dim-box {
    width: 28px;
    height: 16px;
    padding-left: 2px;
    border: 1px solid #b5b5b5;
    background: #dadada;
    color: #888;
}

.spectrum {
    height: 11px;
    display: flex;
    justify-content: flex-end;
    background: linear-gradient(rgba(255, 255, 255, .8), rgba(255, 255, 255, 0) 45%, rgba(0, 0, 0, .35)), linear-gradient(90deg, #e01020, #ffe600 16%, #00a040 32%, #00a0f0 50%, #202080 66%, #e01080 82%, #e01020);
}

.spectrum i {
    width: 6px;
    background: linear-gradient(#fff 50%, #000 50%);
}

.mask {
    height: 183px;
    padding: 3px 29px 0 3px;
    color: #999;
}

.mask-top {
    display: flex;
    align-items: center;
    gap: 4px;
    padding-bottom: 3px;
    margin-bottom: 3px;
    border-bottom: 1px solid #aaa;
}

.mask-top em {
    flex: 1;
}

.mask-top .icon {
    margin: 0 3px 0 4px;
}

.thumb {
    width: 25px;
    height: 25px;
    flex: none;
    display: flex;
    align-items: center;
    justify-content: center;
    border: 1px solid #333;
    background: #fff;
    color: #444;
    font-family: "Liberation Serif", serif;
    font-size: 17px;
}

.mask-row {
    display: flex;
    align-items: center;
    justify-content: space-between;
    height: 18px;
}

.mask-row .dim-box {
    width: 44px;
}

.track {
    height: 3px;
    margin: 6px 4px 5px;
    border-top: 1px solid #aaa;
    background: #eee;
}

.mask-adjust {
    display: flex;
    justify-content: space-between;
    padding-top: 3px;
}

.mask-btns {
    display: flex;
    flex-direction: column;
    gap: 7px;
}

.mask-btns .opt-btn {
    width: 62px;
    margin: 0;
}

.mask-foot {
    display: flex;
    align-items: center;
    gap: 9px;
    margin-top: 6px;
    padding-left: 4px;
    border-top: 1px solid #aaa;
}

.last {
    margin-left: auto;
}

.mask-foot .last {
    margin-right: 4px;
}

.layers {
    flex: 1;
    min-height: 0;
    display: flex;
    flex-direction: column;
    border-bottom: 1px solid #777;
}

.layer-opts {
    height: 21px;
    flex: none;
    display: flex;
    align-items: center;
    padding: 0 4px 0 3px;
    border-bottom: 1px solid #aaa;
    color: #999;
    white-space: nowrap;
}

.layer-opts .icon {
    margin-right: 3px;
}

.layer-opts label {
    margin-right: 2px;
}

.pick.blend {
    flex: 1;
    min-width: 0;
    margin-right: 2px;
    color: #333;
}

.pick.blend::after {
    border-top-color: #999;
}

.lock-name {
    margin-right: 5px;
}

.pct {
    width: 32px;
    height: 15px;
    padding-left: 2px;
    border: 1px solid #999;
    color: #777;
}

.pct-more {
    width: 14px;
    height: 15px;
    flex: none;
    border: 1px solid #aaa;
    border-left: 0;
    background: #e8e8e8;
}

.layer-area {
    flex: 1;
    min-height: 0;
    display: flex;
}

.layer-list {
    flex: 1;
    min-width: 0;
    margin-right: 2px;
    font-size: 9px;
}

.layer {
    display: flex;
    border-bottom: 1px solid #999;
}

.eye-box {
    width: 18px;
    flex: none;
    padding-top: 8px;
    text-align: center;
    border-right: 1px solid #aaa;
}

.eye {
    width: 11px;
    height: 9px;
}

.layer-main {
    flex: 1;
    height: 30px;
    display: flex;
    align-items: center;
    gap: 5px;
    padding-left: 2px;
}

.chosen {
    background: #3399ff;
    color: #fff;
}

.fx {
    margin-left: auto;
    font-family: "Liberation Serif", serif;
    font-size: 13px;
    font-style: italic;
    font-weight: bold;
    color: #333;
}

.fold {
    width: 8px;
    height: 30px;
    display: flex;
    align-items: center;
    justify-content: center;
    background: #6aa8e6;
}

.fold .up {
    border-bottom-color: #222;
}

.layer-stack {
    flex: 1;
}

.effects {
    padding-left: 14px;
}

.effect {
    display: flex;
    align-items: center;
    gap: 4px;
    height: 14px;
}

.effect.nested {
    height: 15px;
    margin-left: 11px;
    padding-left: 3px;
    border-top: 1px solid #aaa;
}

.thumb.plain {
    width: 20px;
}

.layer-main em {
    font-weight: bold;
}

.lock {
    margin: 0 10px 0 auto;
}

.layer-foot {
    height: 14px;
    flex: none;
    display: flex;
    align-items: center;
    justify-content: space-between;
    padding: 0 17px 0 35px;
    border-top: 1px solid #aaa;
}

.layer-foot .fx {
    margin: 0;
    font-size: 12px;
    color: #555;
}

/* site mark over the lower right corner */
.watermark {
    position: absolute;
    right: 50px;
    bottom: 22px;
    width: 180px;
    color: #fff;
    opacity: .75;
    text-shadow: 0 0 2px #999;
}

.brand {
    display: flex;
    align-items: flex-end;
}

.bai {
    font-family: "Liberation Sans", sans-serif;
    font-size: 38px;
    font-weight: bold;
    line-height: 32px;
}

.paw {
    position: relative;
    width: 52px;
    height: 56px;
}

.paw svg {
    width: 52px;
    height: 56px;
    filter: drop-shadow(0 0 1px #999);
}

.paw b {
    position: absolute;
    left: 13px;
    bottom: 5px;
    font-family: "Liberation Sans", sans-serif;
    font-size: 22px;
    line-height: 22px;
    color: #aaa;
    text-shadow: none;
}

.jy {
    margin-left: 3px;
    font-size: 30px;
    font-weight: bold;
    line-height: 32px;
}

.site {
    margin-top: 4px;
    padding-left: 4px;
    font-size: 20px;
    line-height: 24px;
}
```
